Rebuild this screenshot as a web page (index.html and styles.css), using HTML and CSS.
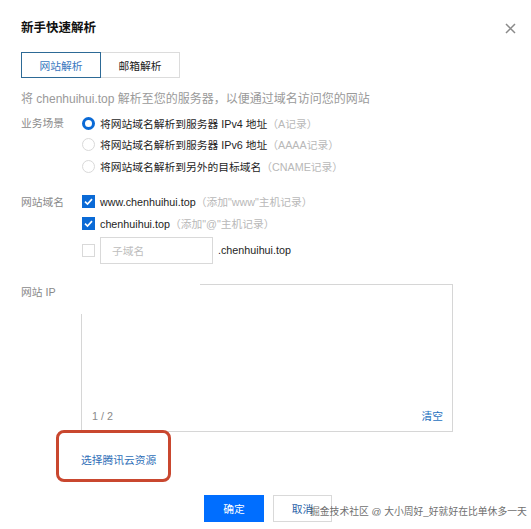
FILE: index.html
```html
<!DOCTYPE html>
<html lang="zh-CN">
<head>
<meta charset="utf-8">
<title>新手快速解析</title>
<link rel="stylesheet" href="styles.css">
</head>
<body>
<div class="dialog">
  <header class="head">
    <h1 class="title">新手快速解析</h1>
    <span class="close" aria-label="关闭">
      <svg width="11" height="11" viewBox="0 0 11 11"><path d="M1 1L10 10M10 1L1 10" stroke="#8a8a8a" stroke-width="1.5" fill="none"/></svg>
    </span>
  </header>

  <div class="tabs">
    <span class="tab active">网站解析</span>
    <span class="tab">邮箱解析</span>
  </div>

  <p class="desc">将 chenhuihui.top 解析至您的服务器，以便通过域名访问您的网站</p>

  <div class="row scene">
    <span class="label">业务场景</span>
    <div class="opts">
      <div class="opt"><span class="radio on"></span><span class="txt">将网站域名解析到服务器 IPv4 地址</span><span class="hint">（A记录）</span></div>
      <div class="opt"><span class="radio"></span><span class="txt">将网站域名解析到服务器 IPv6 地址</span><span class="hint">（AAAA记录）</span></div>
      <div class="opt"><span class="radio"></span><span class="txt">将网站域名解析到另外的目标域名</span><span class="hint">（CNAME记录）</span></div>
    </div>
  </div>

  <div class="row domain">
    <span class="label">网站域名</span>
    <div class="opts">
      <div class="chk-row"><span class="chk on"><svg width="13" height="13" viewBox="0 0 13 13"><path d="M3 6.6L5.5 9L10 4.2" stroke="#fff" stroke-width="1.7" fill="none"/></svg></span><span class="txt">www.chenhuihui.top</span><span class="hint">（添加"www"主机记录）</span></div>
      <div class="chk-row"><span class="chk on"><svg width="13" height="13" viewBox="0 0 13 13"><path d="M3 6.6L5.5 9L10 4.2" stroke="#fff" stroke-width="1.7" fill="none"/></svg></span><span class="txt">chenhuihui.top</span><span class="hint">（添加"@"主机记录）</span></div>
      <div class="sub-row"><span class="chk"></span><span class="input">子域名</span><span class="txt suffix">.chenhuihui.top</span></div>
    </div>
  </div>

  <div class="row ip">
    <span class="label">网站 IP</span>
    <div class="area">
      <div class="area-body"></div>
      <div class="area-foot"><span class="count">1 / 2</span><span class="clear">清空</span></div>
      <span class="mask"></span>
    </div>
  </div>

  <div class="res">
    <span class="res-link">选择腾讯云资源</span>
    <span class="mark"></span>
  </div>

  <div class="foot">
    <span class="btn primary">确定</span>
    <span class="btn">取消</span>
    <span class="watermark">掘金技术社区 @ 大小周好_好就好在比单休多一天</span>
  </div>
</div>
</body>
</html>
```

FILE: styles.css
```css
* { box-sizing: border-box; }
html, body { margin: 0; padding: 0; background: #fff; }
body {
  font-family: "Liberation Sans", "Noto Sans CJK SC", sans-serif;
  font-size: 10.75px;
  color: #222;
}
.dialog {
  position: relative;
  width: 531px;
  height: 529px;
  padding: 18px 0 0 21px;
}
.head {
  display: flex;
  justify-content: space-between;
  align-items: center;
  height: 20px;
}
.title {
  margin: 0;
  font-size: 12.5px;
  font-weight: bold;
  line-height: 20px;
  color: #111;
}
.close {
  display: flex;
  margin-right: 15px;
}
.tabs {
  display: flex;
  margin-top: 14px;
  height: 26px;
}
.tab {
  width: 80px;
  height: 26px;
  display: flex;
  align-items: center;
  justify-content: center;
  border: 1px solid #dcdcdc;
  color: #222;
}
.tab.active {
  border-color: #2d6a96;
  color: #3a78c0;
  position: relative;
  z-index: 1;
}
.tab + .tab { margin-left: -1px; width: 80px; }
.desc {
  margin: 12px 0 0;
  font-size: 12px;
  line-height: 18px;
  color: #9a9a9a;
}
.row { display: flex; }
.label {
  width: 61px;
  flex: none;
  color: #8a8a8a;
}
.scene { margin-top: 5px; }
.scene .label { line-height: 21.25px; }
.opt {
  display: flex;
  align-items: center;
  height: 21.25px;
}
.radio {
  width: 13px;
  height: 13px;
  border-radius: 50%;
  border: 1px solid #d9d9d9;
  margin-right: 5px;
  flex: none;
}
.radio.on { border: 3.5px solid #0a6ad6; }
.txt { color: #1e1e1e; }
.hint { color: #b8b8b8; }
.domain { margin-top: 14px; }
.domain .label { line-height: 22px; }
.chk-row {
  display: flex;
  align-items: center;
  height: 22px;
}
.chk {
  width: 13px;
  height: 13px;
  border: 1px solid #d9d9d9;
  margin-right: 5px;
  flex: none;
  display: flex;
}
.chk.on { background: #0a6ad6; border-color: #0a6ad6; }
.chk.on svg { margin: -1px; }
.sub-row {
  display: flex;
  align-items: center;
  margin-top: 2px;
  height: 27px;
}
.input {
  width: 113px;
  height: 27px;
  border: 1px solid #d9d9d9;
  padding-left: 11px;
  display: flex;
  align-items: center;
  color: #bdbdbd;
  margin-right: 5px;
}
.ip { margin-top: 20px; }
.ip .label { line-height: 16px; width: 60px; }
.area {
  position: relative;
  width: 372px;
  height: 148px;
  border: 1px solid #d6d6d6;
  display: flex;
  flex-direction: column;
}
.area-body { flex: 1; }
.area-foot {
  display: flex;
  justify-content: space-between;
  padding: 0 9px 8px 10px;
  line-height: 14px;
}
.count { color: #8a8a8a; }
.clear { color: #1f72bf; }
.mask {
  position: absolute;
  left: -2px;
  top: -2px;
  width: 120px;
  height: 31px;
  background: #fff;
}
.res {
  position: relative;
  margin-top: 20px;
  padding-left: 60px;
  line-height: 16px;
}
.res-link { color: #2f6fb8; }
.mark {
  position: absolute;
  left: 35px;
  top: -22px;
  width: 115px;
  height: 52px;
  border: 3px solid #c9472f;
  border-radius: 8px;
}
.foot {
  position: relative;
  display: flex;
  margin-top: 27px;
  padding-left: 183px;
  gap: 9px;
}
.btn {
  width: 60px;
  height: 27px;
  display: flex;
  align-items: center;
  justify-content: center;
  border: 1px solid #d9d9d9;
  color: #2a62a8;
}
.btn.primary {
  background: #006eff;
  border-color: #006eff;
  color: #fff;
}
.btn + .btn { width: 59px; }
.watermark {
  position: absolute;
  left: 289px;
  top: 10px;
  font-size: 9.8px;
  line-height: 14px;
  color: #6f6f6f;
  white-space: nowrap;
}
```
